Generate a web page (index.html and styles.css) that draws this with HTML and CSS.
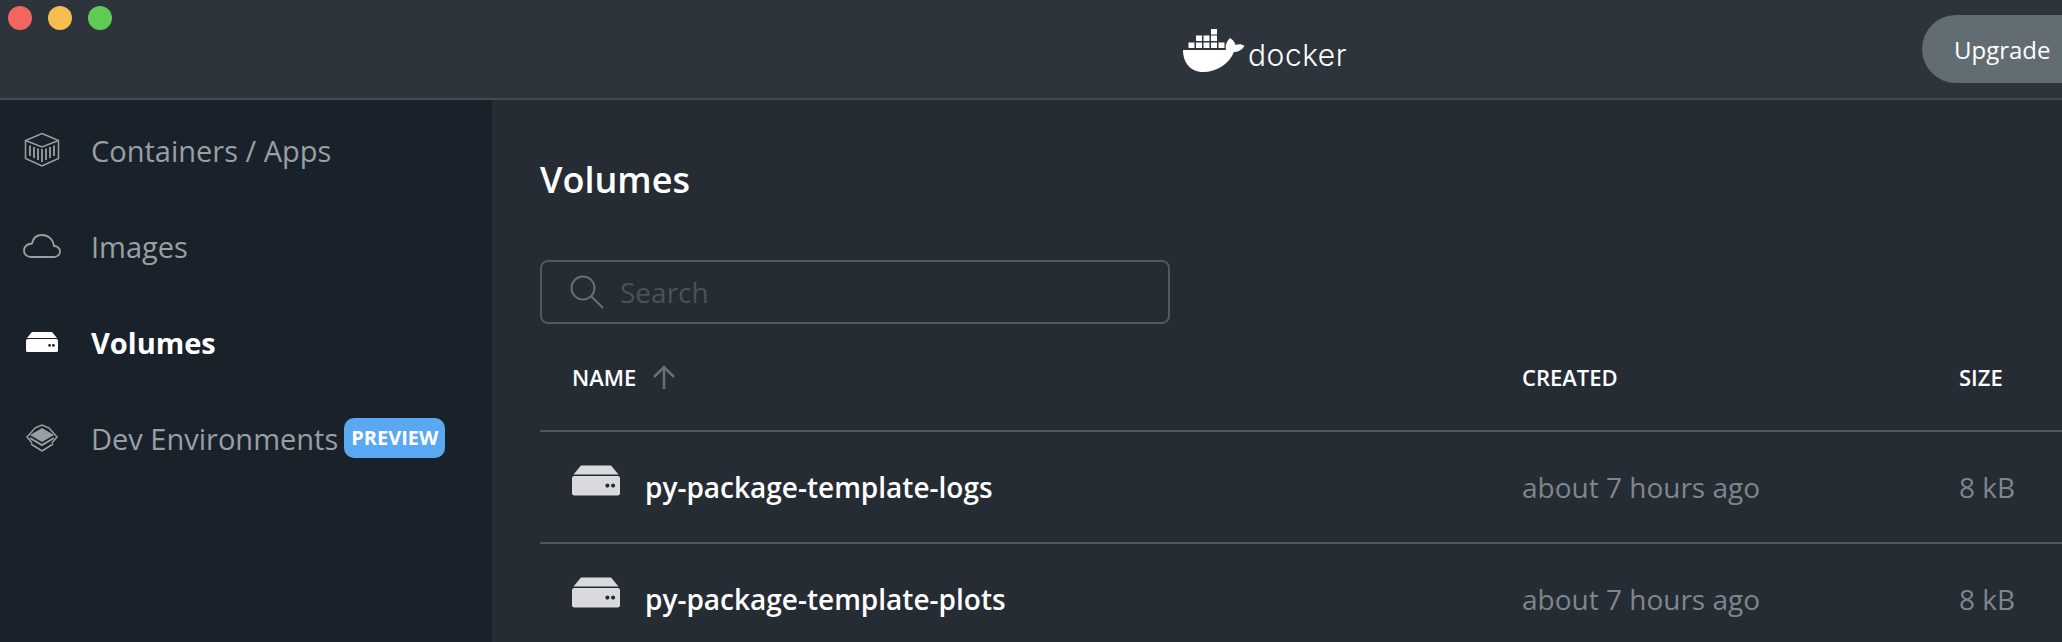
FILE: index.html
```html
<!DOCTYPE html>
<html lang="en">
<head>
    <meta charset="UTF-8">
    <meta name="viewport" content="width=device-width, initial-scale=1.0">
    <title>Docker Desktop - Volumes</title>
    <link rel="stylesheet" href="styles.css">
</head>
<body>
    <svg class="defs" width="0" height="0">
        <symbol id="volume-icon" viewBox="0 0 32 20">
            <path d="M6 0H26L31 6H1Z" fill="currentColor"/>
            <path d="M1.5 7H30.500A1.500 1.500 0 0 1 32 8.500V18.500A1.500 1.500 0 0 1 30.500 20H1.500A1.500 1.500 0 0 1 0 18.500V8.500A1.500 1.500 0 0 1 1.500 7ZM23.600 12A1.400 1.400 0 1 0 23.600 14.800A1.400 1.400 0 1 0 23.600 12ZM27.400 12A1.400 1.400 0 1 0 27.400 14.800A1.400 1.400 0 1 0 27.400 12Z" fill="currentColor" fill-rule="evenodd"/>
        </symbol>
    </svg>

    <header class="topbar">
        <div class="traffic-lights">
            <span class="light red"></span>
            <span class="light yellow"></span>
            <span class="light green"></span>
        </div>
        <div class="logo">
            <svg class="whale" width="62" height="47" viewBox="0 0 62 47">
                <path fill="#fff" d="M0 24H43C42 19 44 15 47 12C50 14 52 16 52.500 19C55 18 59 18 61.500 20C59 24 55 26 51 26C46 38 34 46 20 46C7 46 0 36 0 24Z"/>
                <path fill="#fff" d="M28 3h6v5.500h-6zM13 9.500h6v5.500h-6zM20.500 9.500h6v5.500h-6zM28 9.500h6v5.500h-6zM5.500 16.500h6v5.500h-6zM13 16.500h6v5.500h-6zM20.500 16.500h6v5.500h-6zM28 16.500h6v5.500h-6zM35.500 16.500h6v5.500h-6z"/>
            </svg>
            <span class="wordmark">docker</span>
        </div>
        <button class="upgrade">Upgrade</button>
    </header>

    <div class="layout">
        <nav class="sidebar">
            <a class="nav-item">
                <span class="nav-icon">
                    <svg width="36" height="36" viewBox="0 0 36 36" fill="none" stroke="currentColor" stroke-width="1.500">
                        <path d="M18 1.500L34.500 8.500V26.500L18 34L1.500 26.500V8.500Z"/>
                        <path d="M1.500 8.500L18 15L34.500 8.500"/>
                        <path d="M6 13.500V24M10 15V26M14 16.500V28M18 17V30M22 16.500V28M26 15V26M30 13.500V24" stroke-width="1.800"/>
                    </svg>
                </span>
                Containers / Apps
            </a>
            <a class="nav-item">
                <span class="nav-icon">
                    <svg width="38" height="24" viewBox="0 0 38 24" fill="none" stroke="currentColor" stroke-width="1.800">
                        <path d="M8 23H31C35 23 37 20 37 17.500C37 14 34 12 31 12C30 5 25 1 19 1C14 1 10 4 9 9.500C4 10 1 13 1 17C1 20 4 23 8 23Z"/>
                    </svg>
                </span>
                Images
            </a>
            <a class="nav-item active">
                <span class="nav-icon">
                    <svg width="32" height="20"><use href="#volume-icon"/></svg>
                </span>
                Volumes
            </a>
            <a class="nav-item">
                <span class="nav-icon">
                    <svg width="32" height="28" viewBox="0 0 32 28" fill="none" stroke="currentColor">
                        <path d="M9 4L1 13L6 19M23 4L31 13L26 19M16 27L5 20M16 27L27 20M9 4L16 1L23 4" stroke-width="1.500"/>
                        <path d="M16 4L28 11L16 18L4 11Z" fill="currentColor" stroke="none"/>
                        <path d="M4 14L16 21L28 14" stroke-width="2"/>
                    </svg>
                </span>
                Dev Environments
                <span class="badge">PREVIEW</span>
            </a>
        </nav>

        <main class="content">
            <h1 class="title">Volumes</h1>

            <div class="search">
                <svg width="34" height="34" viewBox="0 0 34 34" fill="none" stroke="#687076" stroke-width="2">
                    <circle cx="13" cy="13" r="11.500"/>
                    <path d="M21 21L33 33"/>
                </svg>
                <span class="search-text">Search</span>
            </div>

            <div class="table">
                <div class="row head">
                    <div class="cell name-head">
                        NAME
                        <svg width="24" height="24" viewBox="0 0 24 24" fill="none" stroke="#687076" stroke-width="2.500">
                            <path d="M12 24V2M2 12L12 2L22 12"/>
                        </svg>
                    </div>
                    <div class="cell">CREATED</div>
                    <div class="cell">SIZE</div>
                </div>
                <div class="row">
                    <div class="cell name">
                        <svg class="row-icon" width="48" height="31"><use href="#volume-icon"/></svg>
                        <span class="name-text">py-package-template-logs</span>
                    </div>
                    <div class="cell muted">about 7 hours ago</div>
                    <div class="cell muted">8 kB</div>
                </div>
                <div class="row">
                    <div class="cell name">
                        <svg class="row-icon" width="48" height="31"><use href="#volume-icon"/></svg>
                        <span class="name-text">py-package-template-plots</span>
                    </div>
                    <div class="cell muted">about 7 hours ago</div>
                    <div class="cell muted">8 kB</div>
                </div>
            </div>
        </main>
    </div>
</body>
</html>
```

FILE: styles.css
```css
html, body {
    height: 100%;
}
body {
    margin: 0;
    overflow: hidden;
    background: #252c34;
    color: #fff;
    font-family: "Open Sans", sans-serif;
}
.defs {
    display: block;
    height: 0;
}

/* top bar */
.topbar {
    height: 98px;
    display: flex;
    align-items: center;
    padding-left: 8px;
    background: #2d343c;
    border-bottom: 2px solid #414a50;
    overflow: hidden;
}
.traffic-lights {
    display: flex;
    gap: 16px;
    align-self: flex-start;
    padding-top: 6px;
}
.light {
    width: 24px;
    height: 24px;
    border-radius: 50%;
}
.red { background: #f1675f; }
.yellow { background: #f6bd4f; }
.green { background: #5fcb55; }
.logo {
    display: flex;
    align-items: center;
    gap: 3px;
    margin-left: auto;
    margin-right: 575px;
}
.wordmark {
    font-family: "Inter", sans-serif;
    font-weight: 300;
    font-size: 30px;
    letter-spacing: 0.5px;
    padding-top: 12px;
}
.upgrade {
    width: 180px;
    height: 68px;
    margin-right: -40px;
    padding: 0 0 0 32px;
    flex-shrink: 0;
    border: 0;
    border-radius: 34px;
    background: #626d73;
    color: #fff;
    font-family: "Open Sans", sans-serif;
    font-size: 24px;
    text-align: left;
}

/* sidebar */
.layout {
    display: flex;
    height: 542px;
}
.sidebar {
    width: 492px;
    flex-shrink: 0;
    padding-top: 2px;
    background: #19222b;
    box-sizing: border-box;
}
.nav-item {
    height: 96px;
    display: flex;
    align-items: center;
    color: #9a9fa3;
    font-size: 29px;
}
.nav-item.active {
    color: #fff;
    font-weight: 700;
}
.nav-icon {
    width: 84px;
    margin-left: 7px;
    display: flex;
    justify-content: center;
    padding-right: 0;
    flex-shrink: 0;
    box-sizing: border-box;
    padding-left: 0;
    transform: translateX(-7px);
}
.badge {
    margin-left: 6px;
    height: 40px;
    line-height: 40px;
    padding: 0 7px;
    border-radius: 10px;
    background: #5aa7f2;
    color: #fff;
    font-size: 20px;
    font-weight: 700;
}

/* volumes table */
.content {
    flex: 1;
    padding: 0 0 0 48px;
}
.title {
    margin: 0;
    padding-top: 52px;
    font-size: 36px;
    font-weight: 600;
    line-height: 56px;
}
.search {
    width: 598px;
    height: 60px;
    margin-top: 52px;
    padding-left: 28px;
    display: flex;
    align-items: center;
    gap: 16px;
    border: 2px solid #525a60;
    border-radius: 8px;
}
.search-text {
    color: #4a5259;
    font-size: 28px;
}
.row {
    height: 110px;
    display: grid;
    grid-template-columns: 950px 437px 1fr;
    padding-left: 32px;
    align-items: center;
    border-bottom: 2px solid #50565b;
}
.row.head {
    height: 106px;
    font-size: 22px;
    font-weight: 600;
}
.name-head {
    display: flex;
    align-items: center;
    gap: 16px;
}
.name {
    display: flex;
    align-items: center;
    gap: 25px;
}
.row-icon {
    color: #d8dadd;
    margin-top: -14px;
}
.name-text {
    font-size: 28px;
    font-weight: 600;
}
.muted {
    color: #7f868c;
    font-size: 28px;
}
```
